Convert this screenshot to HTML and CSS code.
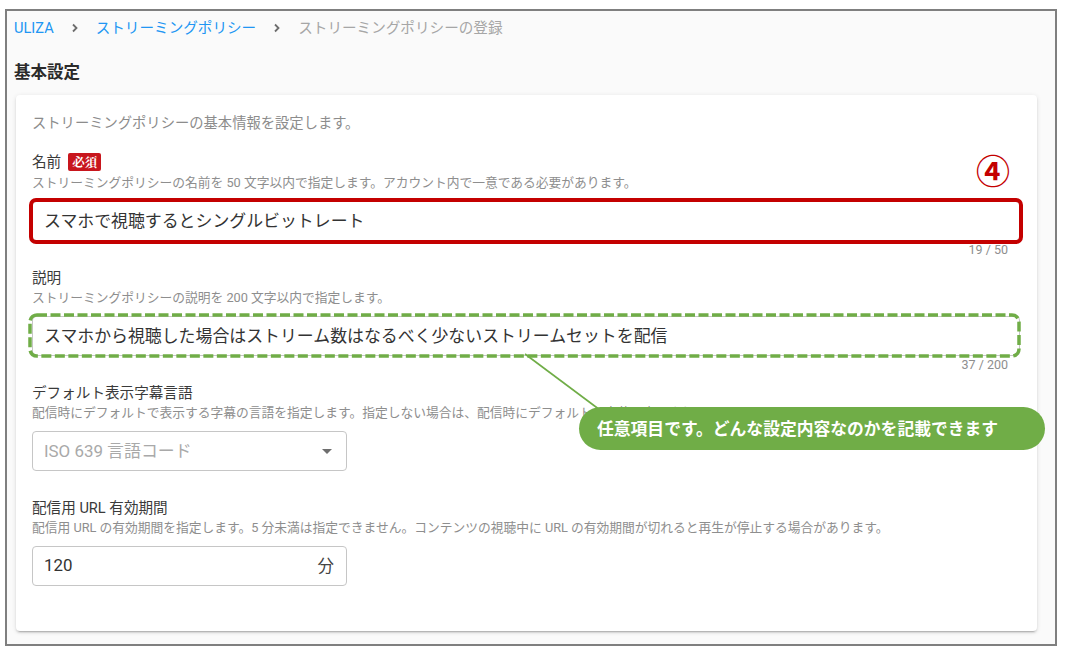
FILE: index.html
```html
<!DOCTYPE html>
<html lang="ja">
<head>
<meta charset="utf-8">
<title>ストリーミングポリシーの登録</title>
<link rel="stylesheet" href="styles.css">
</head>
<body>
<div class="frame">
  <nav class="crumbs">
    <a class="crumb crumb--link">ULIZA</a>
    <span class="sep"><svg width="8" height="10" viewBox="0 0 8 10"><path d="M2 1.5 L5.5 5 L2 8.5" fill="none" stroke="#6d6d6d" stroke-width="1.8"/></svg></span>
    <a class="crumb crumb--link">ストリーミングポリシー</a>
    <span class="sep"><svg width="8" height="10" viewBox="0 0 8 10"><path d="M2 1.5 L5.5 5 L2 8.5" fill="none" stroke="#6d6d6d" stroke-width="1.8"/></svg></span>
    <span class="crumb crumb--current">ストリーミングポリシーの登録</span>
  </nav>

  <h2 class="section-title">基本設定</h2>

  <div class="card">
    <p class="card-desc">ストリーミングポリシーの基本情報を設定します。</p>

    <div class="field field--first">
      <div class="label-row label-row--req"><span class="label">名前</span><span class="badge">必須</span></div>
      <div class="hint">ストリーミングポリシーの名前を 50 文字以内で指定します。アカウント内で一意である必要があります。</div>
      <div class="input input--wide hl-red"><span class="value">スマホで視聴するとシングルビットレート</span></div>
      <div class="foot">19 / 50</div>
    </div>

    <div class="field">
      <div class="label-row"><span class="label">説明</span></div>
      <div class="hint">ストリーミングポリシーの説明を 200 文字以内で指定します。</div>
      <div class="input input--wide input--desc">
        <span class="value">スマホから視聴した場合はストリーム数はなるべく少ないストリームセットを配信</span>
        <svg class="dash-box" width="994" height="46" viewBox="0 0 994 46"><rect x="2" y="2" width="989" height="41" rx="7" ry="7" fill="none" stroke="#70ad47" stroke-width="3.5" stroke-dasharray="10 3.5"/></svg>
      </div>
      <div class="foot">37 / 200</div>
    </div>

    <div class="field">
      <div class="label-row"><span class="label">デフォルト表示字幕言語</span></div>
      <div class="hint">配信時にデフォルトで表示する字幕の言語を指定します。指定しない場合は、配信時にデフォルトの字幕は表示されません。</div>
      <div class="input input--small">
        <span class="placeholder">ISO 639 言語コード</span>
        <span class="caret"></span>
      </div>
      <div class="foot"></div>
    </div>

    <div class="field">
      <div class="label-row"><span class="label">配信用 URL 有効期間</span></div>
      <div class="hint">配信用 URL の有効期間を指定します。5 分未満は指定できません。コンテンツの視聴中に URL の有効期間が切れると再生が停止する場合があります。</div>
      <div class="input input--small">
        <span class="value">120</span>
        <span class="suffix">分</span>
      </div>
      <div class="foot"></div>
    </div>
  </div>

  <div class="marker">④</div>
  <svg class="connector" width="90" height="66" viewBox="0 0 90 66"><line x1="5" y1="3" x2="84" y2="62" stroke="#70ad47" stroke-width="1.6"/></svg>
  <div class="callout">任意項目です。どんな設定内容なのかを記載できます</div>
</div>
</body>
</html>
```

FILE: styles.css
```css
* { box-sizing: border-box; }

html, body {
  margin: 0;
  padding: 0;
  background: #ffffff;
}

body {
  font-family: Roboto, "Noto Sans CJK JP", "Noto Sans", sans-serif;
  font-weight: 400;
  color: #333333;
}

.frame {
  position: relative;
  margin: 9px 0 0 5px;
  width: 1052px;
  border: 2px solid #7f7f7f;
  background: #fafafa;
  padding: 7px 18px 13px 7px;
}

/* breadcrumb */
.crumbs {
  display: flex;
  align-items: center;
  height: 20px;
  font-size: 14.6px;
  line-height: 20px;
}

.crumb--link { color: #2196f3; }
.crumb--current { color: #a6a6a6; }

.sep {
  display: flex;
  align-items: center;
  padding: 0 17px 0 17px;
}

.section-title {
  margin: 24px 0 0 0;
  font-size: 16.5px;
  line-height: 22px;
  font-weight: 700;
  color: #2b2b2b;
}

/* card */
.card {
  margin: 11px 0 0 2px;
  background: #ffffff;
  border-radius: 4px;
  box-shadow: 0 3px 1px -2px rgba(0,0,0,.16), 0 2px 2px 0 rgba(0,0,0,.10), 0 1px 5px 0 rgba(0,0,0,.10);
  padding: 18px 16px 28px 16px;
}

.card-desc {
  margin: 0;
  font-size: 14.3px;
  line-height: 20px;
  color: #8c8c8c;
}

.field { margin-top: 10px; }
.field--first { margin-top: 18px; }

.label-row {
  display: flex;
  align-items: center;
  height: 20px;
}
.label-row--req { height: 22px; }

.label {
  font-size: 14.6px;
  line-height: 20px;
  color: #3a3a3a;
}

.badge {
  margin-left: 7px;
  height: 18px;
  padding: 0 4px;
  background: #c8161d;
  color: #ffffff;
  font-family: "Noto Serif CJK JP", "Noto Sans CJK JP", serif;
  font-weight: 700;
  font-size: 12.5px;
  line-height: 18px;
  border-radius: 2px;
}

.hint {
  margin-top: 2px;
  font-size: 12.75px;
  line-height: 16px;
  color: #8e8e8e;
  white-space: nowrap;
}

.input {
  position: relative;
  margin-top: 10px;
  height: 40px;
  border: 1px solid #c6c6c6;
  border-radius: 4px;
  background: #ffffff;
  display: flex;
  align-items: center;
  padding: 0 12px 3px 11px;
  font-size: 16.9px;
}

.input--wide { width: 988px; }
.input--small { width: 315px; justify-content: space-between; }

.hl-red {
  outline: 4px solid #c40000;
  outline-offset: -1px;
}

.dash-box {
  position: absolute;
  left: -5px;
  top: -4px;
  pointer-events: none;
}

.value { color: #333333; }
.placeholder { color: #a9a9a9; }

.caret {
  width: 0;
  height: 0;
  margin-right: 2px;
  margin-top: 3px;
  border-left: 5px solid transparent;
  border-right: 5px solid transparent;
  border-top: 5px solid #6e6e6e;
}

.suffix {
  color: #444444;
  font-size: 16.5px;
}

.foot {
  margin-top: 1px;
  height: 16px;
  padding-right: 13px;
  text-align: right;
  font-size: 12.5px;
  line-height: 16px;
  color: #8e8e8e;
}

/* annotations */
.marker {
  position: absolute;
  left: 969px;
  top: 140px;
  font-family: "Noto Sans CJK JP", sans-serif;
  font-weight: 700;
  font-size: 34px;
  line-height: 38px;
  color: #c40000;
}

.connector {
  position: absolute;
  left: 513px;
  top: 340px;
}

.callout {
  position: absolute;
  left: 572px;
  top: 396px;
  width: 466px;
  height: 43px;
  border-radius: 22px;
  background: #70ad47;
  color: #ffffff;
  font-family: "Noto Sans CJK JP", sans-serif;
  font-weight: 700;
  font-size: 16.8px;
  line-height: 43px;
  padding-left: 18px;
  white-space: nowrap;
}
```
